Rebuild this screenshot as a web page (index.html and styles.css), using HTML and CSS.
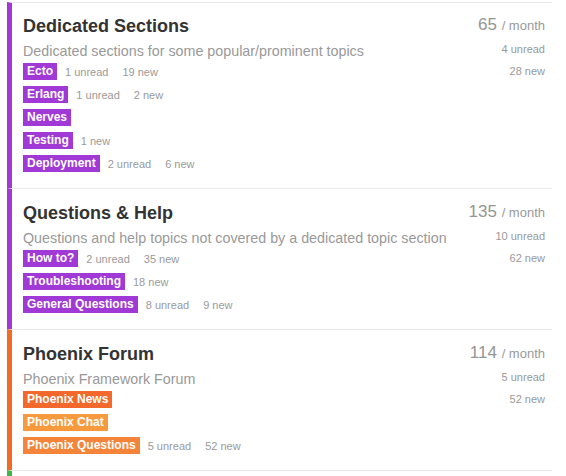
FILE: index.html
```html
<!DOCTYPE html>
<html lang="en">
<head>
  <meta charset="UTF-8" />
  <meta name="viewport" content="width=device-width, initial-scale=1" />
  <title>Categories</title>
  <link rel="stylesheet" href="styles.css">
</head>
<body>

  <div class="categories">

    <div class="row purple">
      <div class="main">
        <h3 class="title">Dedicated Sections</h3>
        <div class="desc">Dedicated sections for some popular/prominent topics</div>
        <div class="subs">
          <div class="sub"><span class="badge purple">Ecto</span><span class="meta">1 unread</span><span class="meta">19 new</span></div>
          <div class="sub"><span class="badge purple">Erlang</span><span class="meta">1 unread</span><span class="meta">2 new</span></div>
          <div class="sub"><span class="badge purple">Nerves</span></div>
          <div class="sub"><span class="badge purple">Testing</span><span class="meta">1 new</span></div>
          <div class="sub"><span class="badge purple">Deployment</span><span class="meta">2 unread</span><span class="meta">6 new</span></div>
        </div>
      </div>
      <div class="stats">
        <div class="count">65 <small>/ month</small></div>
        <div class="stat">4 unread</div>
        <div class="stat">28 new</div>
      </div>
    </div>

    <div class="row purple">
      <div class="main">
        <h3 class="title">Questions &amp; Help</h3>
        <div class="desc">Questions and help topics not covered by a dedicated topic section</div>
        <div class="subs">
          <div class="sub"><span class="badge purple">How to?</span><span class="meta">2 unread</span><span class="meta">35 new</span></div>
          <div class="sub"><span class="badge purple">Troubleshooting</span><span class="meta">18 new</span></div>
          <div class="sub"><span class="badge purple">General Questions</span><span class="meta">8 unread</span><span class="meta">9 new</span></div>
        </div>
      </div>
      <div class="stats">
        <div class="count">135 <small>/ month</small></div>
        <div class="stat">10 unread</div>
        <div class="stat">62 new</div>
      </div>
    </div>

    <div class="row orange">
      <div class="main">
        <h3 class="title">Phoenix Forum</h3>
        <div class="desc">Phoenix Framework Forum</div>
        <div class="subs">
          <div class="sub"><span class="badge news">Phoenix News</span></div>
          <div class="sub"><span class="badge chat">Phoenix Chat</span></div>
          <div class="sub"><span class="badge questions">Phoenix Questions</span><span class="meta">5 unread</span><span class="meta">52 new</span></div>
        </div>
      </div>
      <div class="stats">
        <div class="count">114 <small>/ month</small></div>
        <div class="stat">5 unread</div>
        <div class="stat">52 new</div>
      </div>
    </div>

    <div class="row green"></div>

  </div>

</body>
</html>
```

FILE: styles.css
```css
html, body {
  overflow: hidden;
}
body {
  margin: 0;
  background: #fff;
  font-family: "Liberation Sans", Arial, sans-serif;
  color: #333;
}
.categories {
  margin-left: 7px;
  width: 545px;
  padding-top: 2px;
}
.row {
  display: flex;
  border-top: 1px solid #e9e9e9;
  border-left: 5px solid #a139d6;
  padding: 13px 7px 16px 11px;
}
.row:first-child {
  padding-top: 12px;
}
.row.purple {
  border-left-color: #a139d6;
}
.row.orange {
  border-left-color: #f26b24;
}
.row.green {
  border-left-color: #3db54a;
  padding: 0;
  height: 20px;
}
.main {
  flex: 1;
  min-width: 0;
}
.title {
  margin: 0;
  font-size: 18px;
  line-height: 22px;
  font-weight: bold;
  color: #333;
}
.desc {
  margin-top: 4px;
  font-size: 14.3px;
  line-height: 20px;
  color: #999;
  white-space: nowrap;
}
.subs {
  margin-top: 2px;
  display: flex;
  flex-direction: column;
  gap: 6px;
}
.sub {
  display: flex;
  align-items: center;
  height: 17px;
}
.badge {
  display: inline-block;
  height: 17px;
  line-height: 17px;
  padding: 0 4px;
  font-size: 12px;
  font-weight: bold;
  color: #fff;
  background: #a139d6;
}
.badge.news {
  background: #f2692b;
}
.badge.chat {
  background: #f69a3d;
}
.badge.questions {
  background: #f4843a;
}
.meta {
  margin-left: 8px;
  font-size: 11px;
  color: #9a9a9a;
}
.meta + .meta {
  margin-left: 14px;
}
.stats {
  width: 90px;
  text-align: right;
  color: #999;
}
.count {
  font-size: 17px;
  line-height: 20px;
  padding-bottom: 1px;
  color: #959595;
}
.count small {
  font-size: 13px;
  color: #999;
}
.stat {
  margin-top: 3px;
  font-size: 11px;
  line-height: 19px;
  color: #999;
}
```
